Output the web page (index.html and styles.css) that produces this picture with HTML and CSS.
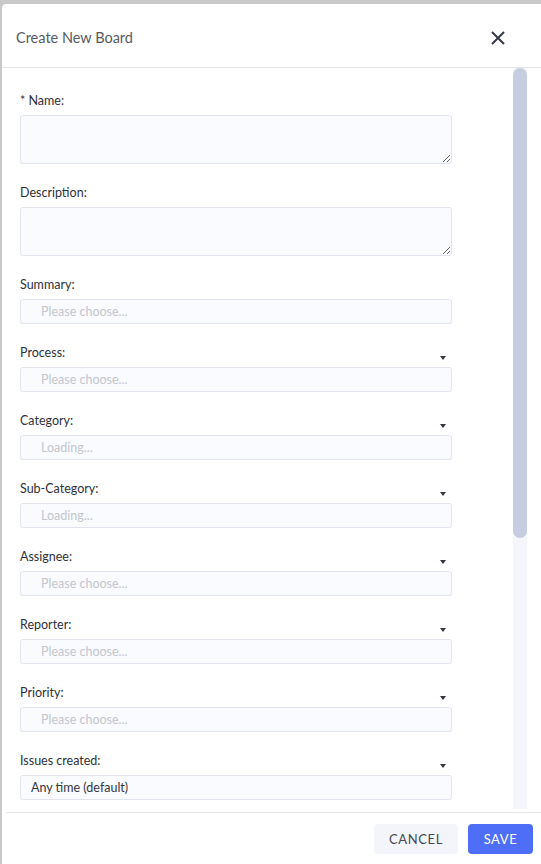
FILE: index.html
```html
<!DOCTYPE html>
<html lang="en">
<head>
    <meta charset="UTF-8">
    <meta name="viewport" content="width=device-width, initial-scale=1.0">
    <title>Create New Board</title>
    <link rel="stylesheet" href="styles.css">
</head>
<body>
    <div class="modal">
        <div class="modal-header">
            <h2 class="modal-title">Create New Board</h2>
            <button class="close-btn" aria-label="Close">
                <svg width="14" height="14" viewBox="0 0 14 14"><path d="M1 1L13 13M13 1L1 13" stroke="#363946" stroke-width="2" fill="none"/></svg>
            </button>
        </div>

        <div class="modal-body">
            <form class="board-form">
                <div class="field">
                    <label class="field-label">* Name:</label>
                    <textarea class="text-area"></textarea>
                </div>
                <div class="field">
                    <label class="field-label">Description:</label>
                    <textarea class="text-area"></textarea>
                </div>
                <div class="field">
                    <label class="field-label">Summary:</label>
                    <input class="select-input" placeholder="Please choose...">
                </div>
                <div class="field">
                    <label class="field-label has-arrow">Process:</label>
                    <input class="select-input" placeholder="Please choose...">
                </div>
                <div class="field">
                    <label class="field-label has-arrow">Category:</label>
                    <input class="select-input" placeholder="Loading...">
                </div>
                <div class="field">
                    <label class="field-label has-arrow">Sub-Category:</label>
                    <input class="select-input" placeholder="Loading...">
                </div>
                <div class="field">
                    <label class="field-label has-arrow">Assignee:</label>
                    <input class="select-input" placeholder="Please choose...">
                </div>
                <div class="field">
                    <label class="field-label has-arrow">Reporter:</label>
                    <input class="select-input" placeholder="Please choose...">
                </div>
                <div class="field">
                    <label class="field-label has-arrow">Priority:</label>
                    <input class="select-input" placeholder="Please choose...">
                </div>
                <div class="field">
                    <label class="field-label has-arrow">Issues created:</label>
                    <input class="select-input filled" value="Any time (default)">
                </div>
            </form>
            <div class="scroll-track"><div class="scroll-thumb"></div></div>
        </div>

        <div class="modal-footer">
            <button class="btn btn-cancel">Cancel</button>
            <button class="btn btn-save">Save</button>
        </div>
    </div>
</body>
</html>
```

FILE: styles.css
```css
* { margin: 0; padding: 0; box-sizing: border-box; }

body {
    font-family: Lato, 'Open Sans', sans-serif;
    background: #c9c9c9;
    height: 100vh;
    overflow: hidden;
    padding: 4px 0 0 2px;
}

.modal {
    background: #ffffff;
    border-radius: 4px 0 0 0;
    height: 861px;
    display: flex;
    flex-direction: column;
}

.modal-header {
    height: 64px;
    flex-shrink: 0;
    display: flex;
    align-items: center;
    justify-content: space-between;
    padding: 4px 36px 0 14px;
    border-bottom: 1px solid #e3e5eb;
}

.modal-title {
    font-size: 14.5px;
    font-weight: 400;
    color: #575a63;
}

.close-btn {
    border: none;
    background: none;
    width: 14px;
    height: 14px;
    display: flex;
    cursor: pointer;
}

.modal-body {
    height: 741px;
    flex-shrink: 0;
    display: flex;
    overflow: hidden;
    margin-right: 14px;
    padding-left: 18px;
}

.board-form {
    flex: 1;
    display: flex;
    flex-direction: column;
    gap: 21px;
    padding: 25px 61px 0 0;
}

.scroll-track {
    width: 14px;
    background: #f5f6fc;
}

.scroll-thumb {
    height: 470px;
    background: #c7cde1;
    border-radius: 7px;
}

.field {
    display: flex;
    flex-direction: column;
    gap: 6px;
}

.field-label {
    display: flex;
    justify-content: space-between;
    align-items: flex-end;
    font-size: 12.5px;
    line-height: 16px;
    color: #2f313a;
}

.has-arrow::after {
    content: '';
    width: 0;
    height: 0;
    margin: 0 6px 1px 0;
    border-left: 3.5px solid transparent;
    border-right: 3.5px solid transparent;
    border-top: 4px solid #33353f;
}

.text-area {
    height: 49px;
    resize: vertical;
    background: #fafbfe;
    border: 1px solid #e1e3ee;
    border-radius: 3px;
    font-family: inherit;
    font-size: 12px;
    padding: 6px 10px;
    outline: none;
}

.select-input {
    height: 25px;
    background: #fafbfe;
    border: 1px solid #e1e3ee;
    border-radius: 3px;
    font-family: inherit;
    font-size: 12.5px;
    color: #343640;
    padding: 0 0 0 20px;
    outline: none;
}

.select-input::placeholder { color: #c3c6cf; }
.select-input.filled { padding-left: 10px; }

.modal-footer {
    margin-top: 3px;
    border-top: 1px solid #e3e5eb;
    margin-left: 4px;
    display: flex;
    justify-content: flex-end;
    gap: 10px;
    padding: 11px 8px 11px 0;
}

.btn {
    height: 30px;
    border: none;
    border-radius: 4px;
    font-family: inherit;
    font-size: 13px;
    letter-spacing: 0.6px;
    text-transform: uppercase;
    cursor: pointer;
}

.btn-cancel {
    width: 84px;
    background: #f4f5fa;
    color: #454852;
}

.btn-save {
    width: 65px;
    background: #4f6ef7;
    color: #ffffff;
}
```
